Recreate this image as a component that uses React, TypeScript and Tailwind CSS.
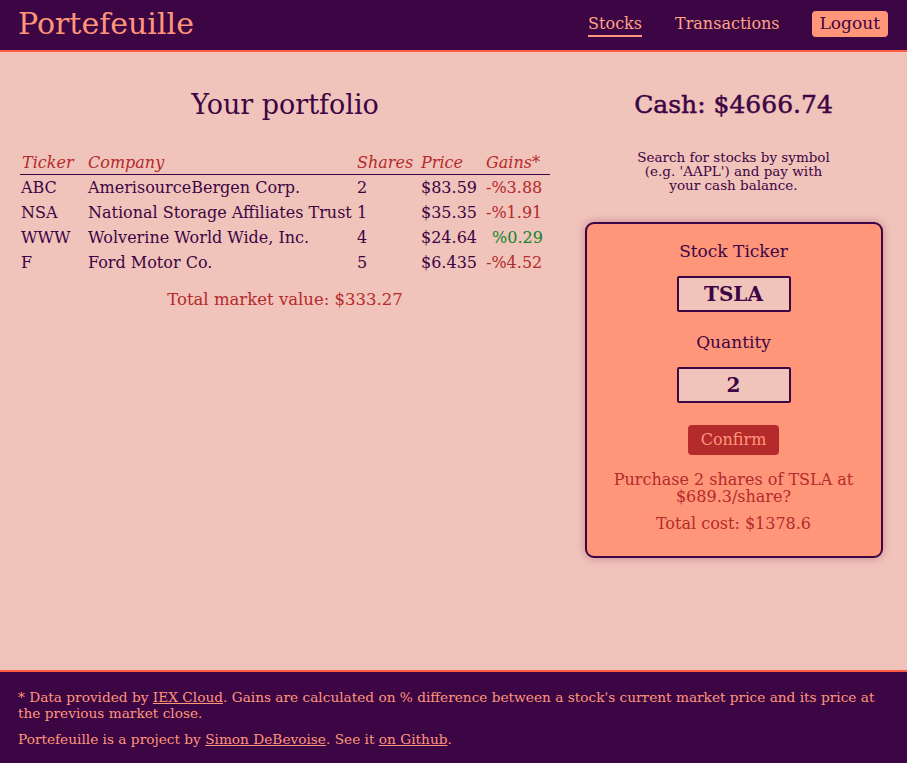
import React from "react";

const rows = [
  { t: "ABC", c: "AmerisourceBergen Corp.", s: "2", p: "$83.59", g: "-%3.88", up: false },
  { t: "NSA", c: "National Storage Affiliates Trust", s: "1", p: "$35.35", g: "-%1.91", up: false },
  { t: "WWW", c: "Wolverine World Wide, Inc.", s: "4", p: "$24.64", g: "%0.29", up: true },
  { t: "F", c: "Ford Motor Co.", s: "5", p: "$6.435", g: "-%4.52", up: false },
];

export default function App() {
  return (
    <div
      className="min-h-screen flex flex-col bg-[#f0c3bb] text-[#3c0544]"
      style={{ fontFamily: '"DejaVu Serif", "Liberation Serif", serif' }}
    >
      <header className="h-[52px] bg-[#3c0544] border-b-2 border-[#ff5a44] flex items-center justify-between pl-[18px] pr-[19px]">
        <div className="text-[30px] leading-none text-[#ff967a] -mt-[3px]">Portefeuille</div>
        <nav className="flex items-center text-[16px] -mt-[2px]">
          <span className="text-[#ffa486] border-b-2 border-[#ff967a] leading-[22px] pt-[1px] mt-[1px]">Stocks</span>
          <span className="text-[#ffa486] ml-[33px] leading-[22px]">Transactions</span>
          <span className="ml-[32px] bg-[#ff967a] text-[#3c0544] rounded-[4px] h-[26px] px-[8px] flex items-center text-[17px]">Logout</span>
        </nav>
      </header>

      <main className="flex-1 flex">
        <section className="w-[570px] flex flex-col items-center pl-[20px] pr-[20px]">
          <h2 className="text-[27px] leading-[32px] mt-[37px]">Your portfolio</h2>
          <table className="w-[530px] table-fixed border-collapse mt-[32px] text-[16px] leading-[20px]">
            <colgroup>
              <col className="w-[66px]" />
              <col className="w-[269px]" />
              <col className="w-[64px]" />
              <col className="w-[65px]" />
              <col className="w-[66px]" />
            </colgroup>
            <thead>
              <tr className="italic text-[#b52a2a] border-b border-[#3c0544] h-[21px]">
                <th className="font-normal text-left px-[2px] align-top">Ticker</th>
                <th className="font-normal text-left px-[2px] align-top">Company</th>
                <th className="font-normal text-left px-[2px] align-top">Shares</th>
                <th className="font-normal text-left px-[2px] align-top">Price</th>
                <th className="font-normal text-left px-[2px] align-top">Gains*</th>
              </tr>
            </thead>
            <tbody>
              {rows.map((r) => (
                <tr key={r.t} className="h-[25px]">
                  <td className="px-[1px] pt-[3px] whitespace-nowrap">{r.t}</td>
                  <td className="px-[2px] pt-[3px] whitespace-nowrap">{r.c}</td>
                  <td className="px-[2px] pt-[3px]">{r.s}</td>
                  <td className="px-[2px] pt-[3px]">{r.p}</td>
                  <td className={"pr-[2px] pt-[3px] " + (r.up ? "text-[#12852a] pl-[8px]" : "text-[#b52a2a] pl-[2px]")}>{r.g}</td>
                </tr>
              ))}
            </tbody>
          </table>
          <p className="text-[#b52a2a] text-[16.5px] leading-[20px] mt-[16px]">Total market value: $333.27</p>
        </section>

        <section className="flex-1 flex flex-col items-center pr-[10px]">
          <h2 className="text-[25px] leading-[32px] mt-[37px] [-webkit-text-stroke:0.5px_#3c0544]">Cash: $4666.74</h2>
          <p className="text-[13.5px] leading-[14px] text-center mt-[29px]">
            Search for stocks by symbol
            <br />
            (e.g. 'AAPL') and pay with
            <br />
            your cash balance.
          </p>
          <div className="mt-[30px] w-[298px] h-[336px] bg-[#ff967a] border-2 border-[#3c0544] rounded-[9px] shadow-[0_0_8px_rgba(120,20,60,0.35)] flex flex-col items-center pt-[15px]">
            <div className="text-[17px] leading-[24px]">Stock Ticker</div>
            <div className="mt-[13px] w-[114px] h-[36px] bg-[#f0c3bb] border-2 border-[#3c0544] rounded-[2px] flex items-center justify-center text-[20px] font-bold">TSLA</div>
            <div className="mt-[18px] text-[17px] leading-[24px]">Quantity</div>
            <div className="mt-[13px] w-[114px] h-[36px] bg-[#f0c3bb] border-2 border-[#3c0544] rounded-[2px] flex items-center justify-center text-[20px] font-bold">2</div>
            <div className="mt-[22px] w-[91px] h-[30px] bg-[#b52a2a] rounded-[4px] text-[#ff967a] text-[16px] flex items-center justify-center">Confirm</div>
            <p className="mt-[16px] text-[#b52a2a] text-[16px] leading-[17px] text-center">
              Purchase 2 shares of TSLA at
              <br />
              $689.3/share?
            </p>
            <p className="mt-[9px] text-[#b52a2a] text-[16px] leading-[20px]">Total cost: $1378.6</p>
          </div>
        </section>
      </main>

      <footer className="bg-[#3c0544] border-t-2 border-[#ff5a44] text-[#ff967a] text-[13.7px] px-[18px] pt-[17px] pb-[16px]">
        <p className="leading-[16px]">
          * Data provided by <span className="underline">IEX Cloud</span>. Gains are calculated on % difference between a stock's current market price and its price at the previous market close.
        </p>
        <p className="leading-[16px] mt-[10px]">
          Portefeuille is a project by <span className="underline">Simon DeBevoise</span>. See it <span className="underline">on Github</span>.
        </p>
      </footer>
    </div>
  );
}
